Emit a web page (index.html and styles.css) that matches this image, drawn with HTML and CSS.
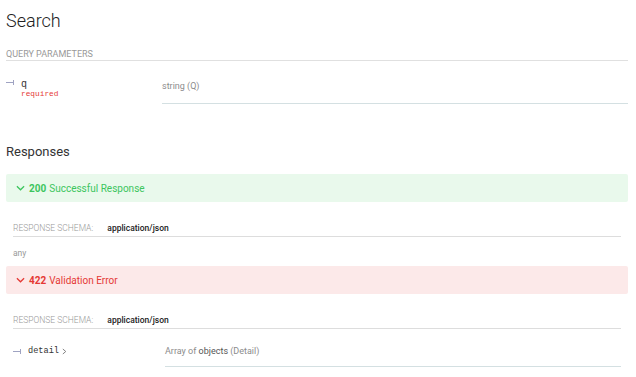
FILE: index.html
```
<!DOCTYPE html>
<html lang="en">

<head>
    <meta charset="UTF-8">
    <meta name="viewport" content="width=device-width, initial-scale=1.0">
    <title>Search</title>
    <link rel="stylesheet" href="styles.css">
</head>

<body>

    <div class="operation">
        <h2 class="op-title">Search</h2>

        <h5 class="params-title">Query Parameters</h5>
        <div class="prop-row">
            <div class="prop-name">
                <svg class="prop-line" viewBox="0 0 8 7" width="8" height="7">
                    <path d="M0 3.5 H7.5 M7.5 1 V6" fill="none" stroke="currentColor" stroke-width="1" />
                </svg>
                <div>
                    <div class="name">q</div>
                    <div class="required">required</div>
                </div>
            </div>
            <div class="prop-detail">
                <span class="type">string (Q)</span>
            </div>
        </div>

        <h3 class="responses-title">Responses</h3>

        <div class="response success">
            <svg class="chevron" viewBox="0 0 10 6" width="9" height="6">
                <path d="M1 1 L5 5 L9 1" fill="none" stroke="currentColor" stroke-width="1.4" />
            </svg>
            <strong>200</strong> Successful Response
        </div>
        <div class="response-body">
            <div class="schema-head">
                <span class="schema-label">Response Schema:</span>
                <span class="schema-type">application/json</span>
            </div>
            <div class="any">any</div>
        </div>

        <div class="response error">
            <svg class="chevron" viewBox="0 0 10 6" width="9" height="6">
                <path d="M1 1 L5 5 L9 1" fill="none" stroke="currentColor" stroke-width="1.4" />
            </svg>
            <strong>422</strong> Validation Error
        </div>
        <div class="response-body">
            <div class="schema-head">
                <span class="schema-label">Response Schema:</span>
                <span class="schema-type">application/json</span>
            </div>
            <div class="prop-row inner">
                <div class="prop-name">
                    <svg class="prop-line" viewBox="0 0 8 7" width="8" height="7">
                        <path d="M0 3.5 H7.5 M7.5 1 V6" fill="none" stroke="currentColor" stroke-width="1" />
                    </svg>
                    <span class="name">detail</span>
                    <svg class="arrow" viewBox="0 0 6 8" width="5" height="7">
                        <path d="M1 1 L4.5 4 L1 7" fill="none" stroke="currentColor" stroke-width="1.1" />
                    </svg>
                </div>
                <div class="prop-detail">
                    <span class="type">Array of <span class="dark">objects</span> (Detail)</span>
                </div>
            </div>
        </div>
    </div>

</body>

</html>
```

FILE: styles.css
```
body {
    margin: 0;
    font-family: Roboto, "Liberation Sans", sans-serif;
    color: #333;
    background: #fff;
}

.operation {
    padding: 0 8px 0 6px;
}

.op-title {
    margin: 0;
    padding-top: 10px;
    font-size: 18px;
    font-weight: 300;
    line-height: 22px;
    color: #222;
}

.params-title {
    margin: 16px 0 0;
    padding-bottom: 0;
    border-bottom: 1px solid #e0e0e0;
    font-size: 9px;
    font-weight: 400;
    line-height: 12px;
    text-transform: uppercase;
    color: #999;
}

.prop-row {
    display: flex;
}

.prop-name {
    width: 156px;
    display: flex;
    align-items: flex-start;
    padding-top: 18px;
}

.prop-line {
    flex: none;
    width: 8px;
    margin: 0 7px 0 0;
    color: #9fa3c2;
}

.name {
    font-family: "Liberation Mono", monospace;
    font-size: 10px;
    line-height: 11px;
    color: #333;
}

.required {
    font-family: "Liberation Mono", monospace;
    font-size: 7.8px;
    line-height: 9px;
    color: #e53935;
}

.prop-detail {
    flex: 1;
    padding: 19px 0 11px;
    border-bottom: 1px solid #d4e0e2;
    font-size: 9px;
    line-height: 12px;
}

.type {
    color: #8c8c8c;
}

.dark {
    color: #555;
}

.responses-title {
    margin: 40px 0 0;
    font-size: 13px;
    font-weight: 400;
    line-height: 16px;
    color: #333;
}

.response {
    margin-top: 14px;
    height: 28px;
    display: flex;
    align-items: center;
    padding-left: 10px;
    font-size: 10px;
    border-radius: 2px;
}

.response strong {
    font-weight: 700;
    margin: 0 3px 0 4px;
}

.success {
    background: #e9f9ec;
    color: #3cc55e;
}

.error {
    margin-top: 0;
    background: #fce9e9;
    color: #e53935;
}

.chevron {
    display: block;
}

.response-body {
    padding: 0 7px;
}

.schema-head {
    margin-top: 20px;
    padding-bottom: 2px;
    border-bottom: 1px solid #ddd;
    font-size: 8.5px;
    line-height: 12px;
}

.schema-label {
    color: #999;
    text-transform: uppercase;
    font-weight: 300;
    margin-right: 12px;
}

.schema-type {
    color: #222;
    font-weight: 500;
}

.any {
    padding: 10px 0 7px;
    font-size: 8.5px;
    line-height: 12px;
    color: #999;
}

.inner .prop-name {
    width: 152px;
    padding-top: 16px;
    align-items: center;
    height: 12px;
}

.inner .prop-line {
    margin-top: 0;
}

.inner .name {
    font-size: 8.6px;
    line-height: 12px;
    margin-right: 3px;
}

.arrow {
    color: #777;
}

.inner .prop-detail {
    padding: 16px 0 9px;
}
```
